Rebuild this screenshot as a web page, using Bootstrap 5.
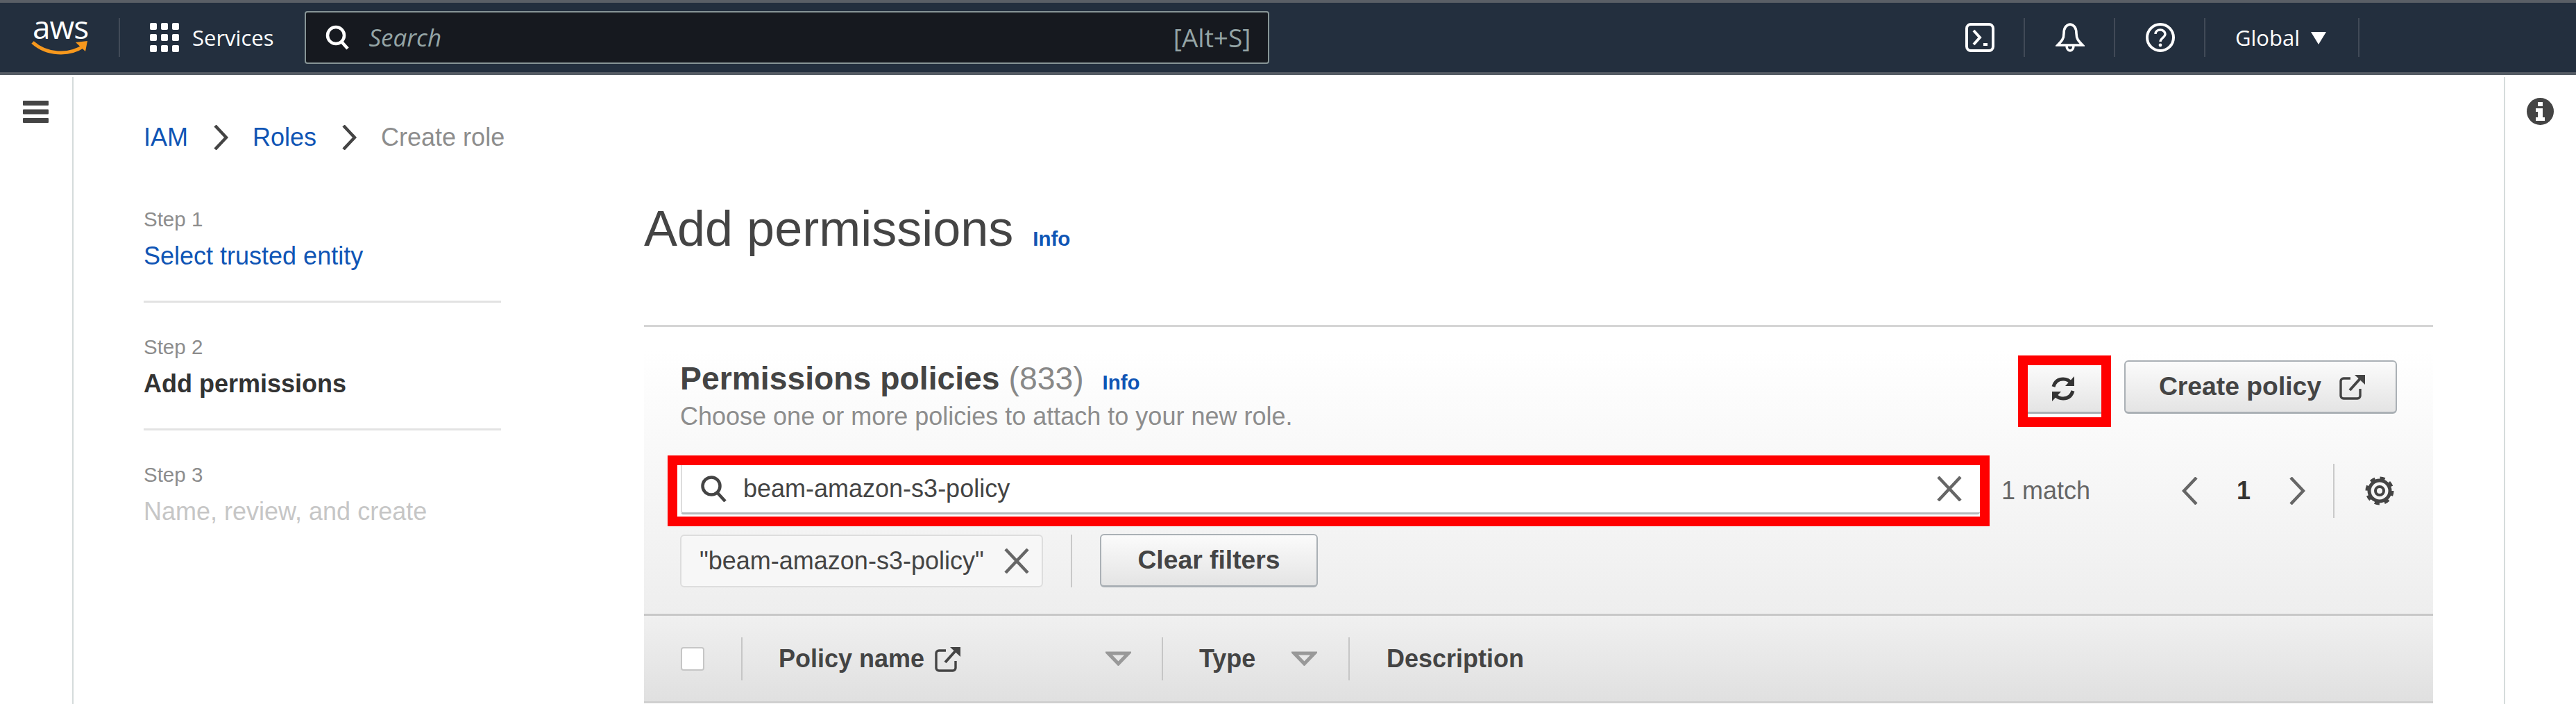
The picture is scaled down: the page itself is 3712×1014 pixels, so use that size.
<!DOCTYPE html>
<html lang="en">
<head>
<meta charset="utf-8">
<title>Add permissions</title>
<link href="https://cdn.jsdelivr.net/npm/bootstrap@5.3.0/dist/css/bootstrap.min.css" rel="stylesheet">
<style>
html,body{height:100%;overflow:hidden;background:#fff}
body{font-family:"Liberation Sans",Arial,sans-serif;font-size:36px;color:#444}
svg{display:block;flex:none}
.topbar{height:108px;background:#232f3e;border-top:4px solid #5a5f66;border-bottom:4px solid #545b64;padding-left:45px;font-family:"Open Sans",sans-serif;color:#fff}
.logo-box{width:83px;height:54px;position:relative;margin-top:-1px}
.logo-word{font-size:46px;line-height:46px;position:absolute;left:2px;top:-12px;letter-spacing:-1px;font-weight:400}
.logo-smile{position:absolute;left:0;top:30px}
.nav-sep{width:2px;height:56px;background:#414a57;flex:none}
.logo-sep{margin-left:43px}
.grid-icon{margin-left:43px}
.svc-label{font-size:31px;margin-left:19px;line-height:40px}
.global-search{width:1390px;height:76px;background:#16191f;border:2px solid #879596;border-radius:4px;margin-left:45px;padding:0 25px 0 28px;color:#95a5a6;font-size:35px}
.global-search em{margin-left:26px}
.alt-hint{font-size:37px}
.top-icon{margin-left:44px;margin-right:42px}
.global-txt{font-size:31px;margin-left:43px;line-height:40px}
.global-caret{margin-left:16px;margin-right:46px}
.end-sep{margin-right:312px}
.workspace{height:calc(100vh - 108px);padding-top:3px}
.rail-left{width:106px;flex:none;border-right:2px solid #d5dbdb;padding:34px 0 0 33px}
.rail-right{width:106px;flex:none;border-left:2px solid #d5dbdb;padding:30px 0 0 31px;margin-left:auto}
.center-col{width:3502px;flex:none;padding:62px 102px 0 101px}
.crumbs{line-height:50px;height:50px;margin:0}
.crumbs a,.step-link,.info-tag{color:#0f55b5;text-decoration:none}
.crumbs span{color:#8d8d8d}
.crumb-gap{margin:0 35.500px}
.content-row{margin-top:61px}
.steps-col{width:515px;flex:none;margin:0 206px 0 0;padding-top:12px}
.step-item{padding-bottom:39px;margin-bottom:44px;border-bottom:3px solid #e3e3e3}
.step-item:last-child{border-bottom:0}
.step-num{font-size:29.5px;line-height:40px;color:#8d8d8d;margin-bottom:8px}
.step-label{line-height:50px;height:50px;white-space:nowrap}
.step-now{font-weight:700;color:#333}
.step-off{color:#c6c6c6}
.main-col{width:2578px;flex:none}
.page-title{font-size:72px;line-height:90px;font-weight:400;margin:0;color:#444}
.title-info{font-size:29.5px;font-weight:700;margin-left:28px;line-height:1;margin-top:30px}
.policy-panel{margin-top:94px;border-top:3px solid #d5d5d5;background:linear-gradient(#fff 0,#fff 8%,#eee 100%);padding:44px 52px 38px}
.panel-title{font-size:46.3px;line-height:60px;margin:0;font-weight:700;color:#444;white-space:nowrap}
.panel-title span{font-weight:400;color:#888}
.panel-info{font-size:29.5px;font-weight:700;margin-left:14px;line-height:1}
.panel-sub{font-size:36px;line-height:44px;margin-top:3px;color:#8d8d8d;white-space:nowrap}
.head-actions{margin-top:-3px;gap:19px}
.red-mark{border:14px solid #f00;background:#fff}
.refresh-mark{width:134px;height:103px}
.aws-btn{background:linear-gradient(#fbfbfb,#e4e4e4);border:2px solid #aab0b5;border-bottom-width:3px;border-radius:6px;font-size:37.3px;font-weight:700;color:#444;padding:0;--bs-btn-hover-bg:#eee}
.refresh-btn{width:100%;height:70px;border:0;border-bottom:3px solid #aab0b5;border-radius:0;padding-right:4px}
.create-btn{width:393px;height:77px;margin-top:7px;gap:26px;padding-left:5px}
.search-row{margin:34px 0 0 -18px}
.search-mark{width:1905px;height:102px;background:#fff;flex:none}
.search-field{height:71px;margin-left:5px;padding:0 26px;border-bottom:3px solid #b5b9bc;border-left:2px solid #ddd;border-radius:0 0 4px 4px;color:#444;background:#fff}
.search-value{margin-left:22px;border:0;outline:0;flex:1;background:transparent;color:#444;padding:0}
.match-txt{margin-left:17px;color:#666;white-space:nowrap}
.pager{margin-left:auto;margin-right:4px}
.pager-num{font-weight:700;color:#333;width:16px;margin:0 59px 0 55px;line-height:1}
.pager-sep{width:2px;height:78px;background:#c9c9c9;margin:0 44px 0 40px}
.chips-row{margin-top:11px}
.chip-tag{width:523px;height:76px;border:2px solid #ddd;border-radius:6px;background:#f7f7f7;padding:0 18px 0 26px;justify-content:space-between;color:#444;white-space:nowrap}
.chips-sep{width:2px;height:76px;background:#c9c9c9;margin:0 40px}
.clear-btn{width:314px;height:77px}
.grid-head{height:129px;background:linear-gradient(#f0f0f0,#e0e0e0);border-top:3px solid #c8c8c8;border-bottom:3px solid #d0d0d0;font-weight:700;color:#444}
.check-cell{width:140px;padding-left:53px;flex:none}
.fake-check{width:34px;height:34px;background:#fff;border:2px solid #c6c6c6;border-radius:4px;display:block}
.cell-sep{width:2px;height:62px;background:#c6c6c6;flex:none}
.name-cell{width:604px;padding:0 44px 0 52px;flex:none}
.type-cell{width:267px;padding:0 45px 0 52px;flex:none}
.desc-cell{padding-left:53px}
.cell-icon{margin-left:15px}
</style>
</head>
<body>
<header class="topbar d-flex align-items-center">
  <div class="logo-box">
    <span class="logo-word">aws</span>
    <svg class="logo-smile" width="83" height="24" viewBox="0 0 83 24"><path d="M2 4C22 22 54 24 76 9" fill="none" stroke="#f7981d" stroke-width="5"/><path d="M64 4 81 2 78 17Z" fill="#f7981d"/></svg>
  </div>
  <div class="nav-sep logo-sep"></div>
  <svg class="grid-icon" width="42" height="42" viewBox="0 0 42 42" fill="#fff"><rect x="0" y="0" width="10" height="10" rx="2"/><rect x="16" y="0" width="10" height="10" rx="2"/><rect x="32" y="0" width="10" height="10" rx="2"/><rect x="0" y="16" width="10" height="10" rx="2"/><rect x="16" y="16" width="10" height="10" rx="2"/><rect x="32" y="16" width="10" height="10" rx="2"/><rect x="0" y="32" width="10" height="10" rx="2"/><rect x="16" y="32" width="10" height="10" rx="2"/><rect x="32" y="32" width="10" height="10" rx="2"/></svg>
  <span class="svc-label">Services</span>
  <div class="global-search d-flex align-items-center">
    <svg width="36" height="36" viewBox="0 0 36 36" fill="none" stroke="#fff" stroke-width="4.5"><circle cx="15" cy="15" r="12"/><path d="M23 24l9 10"/></svg>
    <em>Search</em>
    <span class="alt-hint ms-auto">[Alt+S]</span>
  </div>
  <div class="ms-auto d-flex align-items-center">
    <svg class="top-icon" width="42" height="42" viewBox="0 0 42 42" fill="none" stroke="#fff" stroke-width="4"><rect x="2" y="2" width="38" height="38" rx="6"/><path d="M12 11l9 10-9 10"/><path d="M26 31h6"/></svg>
    <div class="nav-sep"></div>
    <svg class="top-icon" width="42" height="42" viewBox="0 0 42 42" fill="none" stroke="#fff" stroke-width="3.6"><path d="M21 2c-6 1-9 6-9 13 0 8-3 11-9 17h36c-6-6-9-9-9-17 0-7-3-12-9-13z"/><path d="M16 32c0 5 2 8 5 8s5-3 5-8"/></svg>
    <div class="nav-sep"></div>
    <svg class="top-icon" width="42" height="42" viewBox="0 0 42 42" fill="none" stroke="#fff" stroke-width="4"><circle cx="21" cy="21" r="19"/><path d="M14 16c0-4 3-6 7-6s7 3 7 6c0 5-7 6-7 11" stroke-width="3.4"/><circle cx="21" cy="32" r="2.4" fill="#fff" stroke="none"/></svg>
    <div class="nav-sep"></div>
    <span class="global-txt">Global</span>
    <svg class="global-caret" width="22" height="20" viewBox="0 0 22 20"><path d="M0 2h22L11 20z" fill="#fff"/></svg>
    <div class="nav-sep end-sep"></div>
  </div>
</header>
<div class="workspace d-flex">
  <aside class="rail-left">
    <svg width="37" height="32" viewBox="0 0 37 32" fill="#444"><rect width="37" height="7" y="0" rx="1"/><rect width="37" height="7" y="12.5" rx="1"/><rect width="37" height="7" y="25" rx="1"/></svg>
  </aside>
  <main class="center-col">
    <nav class="crumbs d-flex align-items-center">
      <a href="#">IAM</a>
      <svg class="crumb-gap" width="22" height="36" viewBox="0 0 22 36" fill="none" stroke="#444" stroke-width="4.5"><path d="M3 1l16 17L3 35"/></svg>
      <a href="#">Roles</a>
      <svg class="crumb-gap" width="22" height="36" viewBox="0 0 22 36" fill="none" stroke="#444" stroke-width="4.5"><path d="M3 1l16 17L3 35"/></svg>
      <span>Create role</span>
    </nav>
    <div class="content-row d-flex">
      <ul class="steps-col list-unstyled">
        <li class="step-item"><div class="step-num">Step 1</div><div class="step-label"><a class="step-link" href="#">Select trusted entity</a></div></li>
        <li class="step-item"><div class="step-num">Step 2</div><div class="step-label step-now">Add permissions</div></li>
        <li class="step-item"><div class="step-num">Step 3</div><div class="step-label step-off">Name, review, and create</div></li>
      </ul>
      <div class="main-col">
        <div class="d-flex align-items-center">
          <h1 class="page-title">Add permissions</h1>
          <a class="title-info info-tag" href="#">Info</a>
        </div>
        <section class="policy-panel">
          <div class="d-flex justify-content-between align-items-start">
            <div>
              <h2 class="panel-title">Permissions policies <span>(833)</span> <a class="panel-info info-tag" href="#">Info</a></h2>
              <div class="panel-sub">Choose one or more policies to attach to your new role.</div>
            </div>
            <div class="head-actions d-flex align-items-start">
              <div class="red-mark refresh-mark">
                <button class="btn aws-btn refresh-btn d-flex align-items-center justify-content-center" type="button" aria-label="Refresh">
                  <svg width="38" height="38" viewBox="0 0 38 38" fill="none" stroke="#333" stroke-width="5"><path d="M5 16C7 9 12 5 19 5c5 0 9 2 12 6"/><path d="M33 22c-2 7-7 11-14 11-5 0-9-2-12-6"/><path d="M35 1v14H22z" fill="#333" stroke="none"/><path d="M3 37V23h13z" fill="#333" stroke="none"/></svg>
                </button>
              </div>
              <button class="btn aws-btn create-btn d-flex align-items-center justify-content-center" type="button">Create policy
                <svg width="38" height="38" viewBox="0 0 38 38" fill="none" stroke="#444" stroke-width="3.4"><path d="M16 7H6a4 4 0 0 0-4 4v21a4 4 0 0 0 4 4h20a4 4 0 0 0 4-4V22"/><path d="M15 24 33 4" stroke-width="4"/><path d="M22 2h15v14z" fill="#444" stroke="none"/></svg>
              </button>
            </div>
          </div>
          <div class="search-row d-flex align-items-center">
            <div class="red-mark search-mark">
              <div class="search-field d-flex align-items-center">
                <svg width="40" height="38" viewBox="0 0 40 38" fill="none" stroke="#444" stroke-width="4.5"><circle cx="16" cy="15" r="12.5"/><path d="M25 25l11 12"/></svg>
                <input class="search-value" type="text" value="beam-amazon-s3-policy" aria-label="Filter">
                <svg width="36" height="36" viewBox="0 0 36 36" fill="none" stroke="#666" stroke-width="4.5"><path d="M2 1l32 34M34 1 2 35"/></svg>
              </div>
            </div>
            <span class="match-txt">1 match</span>
            <div class="pager d-flex align-items-center">
              <svg width="24" height="40" viewBox="0 0 24 40" fill="none" stroke="#666" stroke-width="4.5"><path d="M21 1 3 20l18 19"/></svg>
              <span class="pager-num">1</span>
              <svg width="24" height="40" viewBox="0 0 24 40" fill="none" stroke="#666" stroke-width="4.5"><path d="M3 1l18 19L3 39"/></svg>
              <div class="pager-sep"></div>
              <svg width="42" height="42" viewBox="0 0 42 42" fill="none" stroke="#444"><circle cx="21" cy="21" r="6" stroke-width="4"/><circle cx="21" cy="21" r="15" stroke-width="5"/><circle cx="21" cy="21" r="18" stroke-width="5" stroke-dasharray="7 7.14"/></svg>
            </div>
          </div>
          <div class="chips-row d-flex align-items-center">
            <div class="chip-tag d-flex align-items-center">"beam-amazon-s3-policy"
              <svg width="36" height="36" viewBox="0 0 36 36" fill="none" stroke="#666" stroke-width="4.5"><path d="M2 1l32 34M34 1 2 35"/></svg>
            </div>
            <div class="chips-sep"></div>
            <button class="btn aws-btn clear-btn" type="button">Clear filters</button>
          </div>
        </section>
        <div class="grid-head d-flex align-items-center">
          <div class="check-cell"><span class="fake-check"></span></div>
          <div class="cell-sep"></div>
          <div class="name-cell d-flex align-items-center">Policy name
            <svg class="cell-icon" width="38" height="38" viewBox="0 0 38 38" fill="none" stroke="#444" stroke-width="3.4"><path d="M16 7H6a4 4 0 0 0-4 4v21a4 4 0 0 0 4 4h20a4 4 0 0 0 4-4V22"/><path d="M15 24 33 4" stroke-width="4"/><path d="M22 2h15v14z" fill="#444" stroke="none"/></svg>
            <svg class="ms-auto" width="37" height="21" viewBox="0 0 37 21" fill="none" stroke="#999" stroke-width="5"><path d="M4 3h29L18.500 18z"/></svg>
          </div>
          <div class="cell-sep"></div>
          <div class="type-cell d-flex align-items-center">Type
            <svg class="ms-auto" width="37" height="21" viewBox="0 0 37 21" fill="none" stroke="#999" stroke-width="5"><path d="M4 3h29L18.500 18z"/></svg>
          </div>
          <div class="cell-sep"></div>
          <div class="desc-cell">Description</div>
        </div>
      </div>
    </div>
  </main>
  <aside class="rail-right">
    <svg width="39" height="39" viewBox="0 0 39 39"><circle cx="19.500" cy="19.500" r="19.500" fill="#444"/><rect x="16" y="6" width="7" height="6" fill="#fff"/><path d="M13 15h10v13h3v5H13v-5h3v-8h-3z" fill="#fff"/></svg>
  </aside>
</div>
<script src="https://cdn.jsdelivr.net/npm/bootstrap@5.3.0/dist/js/bootstrap.bundle.min.js"></script>
</body>
</html>
